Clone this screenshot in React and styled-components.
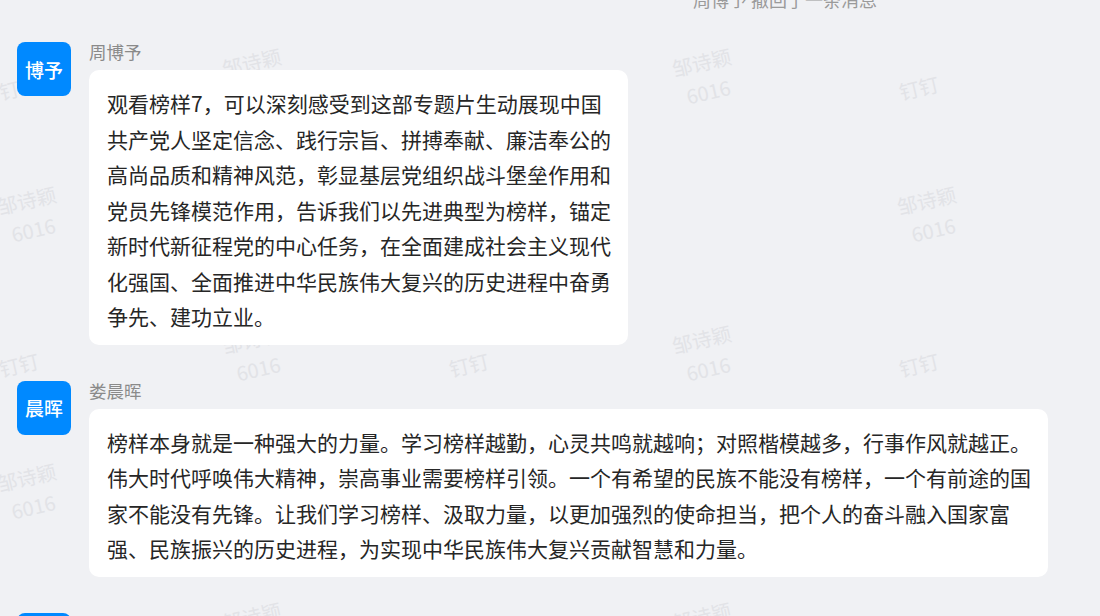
import React from 'react'
import styled, { createGlobalStyle } from 'styled-components'

const GlobalStyle = createGlobalStyle`
  html, body {
    margin: 0;
    padding: 0;
    height: 616px;
    overflow: hidden;
    background: #f0f1f4;
  }
  body {
    font-family: "Noto Sans CJK SC", "Noto Sans", sans-serif;
  }
`

const messages = [
  {
    id: 1,
    avatar: '博予',
    name: '周博予',
    width: 539,
    text: '观看榜样7，可以深刻感受到这部专题片生动展现中国共产党人坚定信念、践行宗旨、拼搏奉献、廉洁奉公的高尚品质和精神风范，彰显基层党组织战斗堡垒作用和党员先锋模范作用，告诉我们以先进典型为榜样，锚定新时代新征程党的中心任务，在全面建成社会主义现代化强国、全面推进中华民族伟大复兴的历史进程中奋勇争先、建功立业。',
  },
  {
    id: 2,
    avatar: '晨晖',
    name: '娄晨晖',
    width: 959,
    text: '榜样本身就是一种强大的力量。学习榜样越勤，心灵共鸣就越响；对照楷模越多，行事作风就越正。伟大时代呼唤伟大精神，崇高事业需要榜样引领。一个有希望的民族不能没有榜样，一个有前途的国家不能没有先锋。让我们学习榜样、汲取力量，以更加强烈的使命担当，把个人的奋斗融入国家富强、民族振兴的历史进程，为实现中华民族伟大复兴贡献智慧和力量。',
  },
  { id: 3, avatar: '', name: '', width: 539, text: '' },
]

// watermark tiles: name block staggered every 225px, app mark every 450px
const nameMarks = []
for (let k = 0; k < 5; k++) {
  const ys = k % 2 === 0 ? [215, 492] : [77, 354, 631]
  ys.forEach((y) => nameMarks.push({ x: 30 + 225 * k, y }))
}
const appMarks = []
;[19, 469, 919].forEach((x) => [88, 365, 642].forEach((y) => appMarks.push({ x, y })))

const App = () => {
  return (
    <>
      <GlobalStyle />
      <Page>
        <Watermarks>
          {nameMarks.map((m, i) => (
            <Mark key={`n${i}`} $x={m.x} $y={m.y}>
              <span>邹诗颖</span>
              <span>6016</span>
            </Mark>
          ))}
          {appMarks.map((m, i) => (
            <Mark key={`a${i}`} $x={m.x} $y={m.y}>
              <span>钉钉</span>
            </Mark>
          ))}
        </Watermarks>

        <Feed>
          <SystemNotice>周博予 撤回了一条消息</SystemNotice>
          {messages.map((msg) => (
            <Message key={msg.id}>
              <Avatar>{msg.avatar}</Avatar>
              <Body>
                <Name>{msg.name}</Name>
                {msg.text && <Bubble $width={msg.width}>{msg.text}</Bubble>}
              </Body>
            </Message>
          ))}
        </Feed>
      </Page>
    </>
  )
}

const Page = styled.div`
  position: relative;
  height: 616px;
  overflow: hidden;
  background: #f0f1f4;
`

const Watermarks = styled.div`
  position: absolute;
  inset: 0;
  z-index: 0;
  pointer-events: none;
`

const Mark = styled.div`
  position: absolute;
  left: ${({ $x }) => $x}px;
  top: ${({ $y }) => $y}px;
  transform: translate(-50%, -50%) rotate(-13deg);
  display: flex;
  flex-direction: column;
  align-items: center;
  font-size: 20px;
  line-height: 30px;
  color: #e2e3e7;
  white-space: nowrap;
`

const Feed = styled.div`
  position: relative;
  z-index: 1;
  display: flex;
  flex-direction: column;
  padding-left: 17px;
`

const SystemNotice = styled.div`
  margin: -14px 0 30px;
  padding-left: 676px;
  font-size: 18px;
  line-height: 26px;
  color: #9a9a9a;
  white-space: nowrap;
`

const Message = styled.div`
  display: flex;
  align-items: flex-start;
  gap: 18px;

  & + & {
    margin-top: 36px;
  }
`

const Avatar = styled.div`
  width: 54px;
  height: 54px;
  flex-shrink: 0;
  border-radius: 8px;
  background: #0089ff;
  color: #fff;
  font-size: 19px;
  font-weight: 500;
  display: flex;
  align-items: center;
  justify-content: center;
`

const Body = styled.div`
  margin-top: -3px;
  display: flex;
  flex-direction: column;
  align-items: flex-start;
`

const Name = styled.div`
  font-size: 17.5px;
  line-height: 25px;
  color: #8a8a8a;
  margin-bottom: 6px;
`

const Bubble = styled.div`
  width: ${({ $width }) => $width}px;
  box-sizing: border-box;
  padding: 16px 16px 10px 18px;
  background: #fff;
  border-radius: 10px;
  font-size: 21px;
  line-height: 35.5px;
  color: #262626;
`

export default App
